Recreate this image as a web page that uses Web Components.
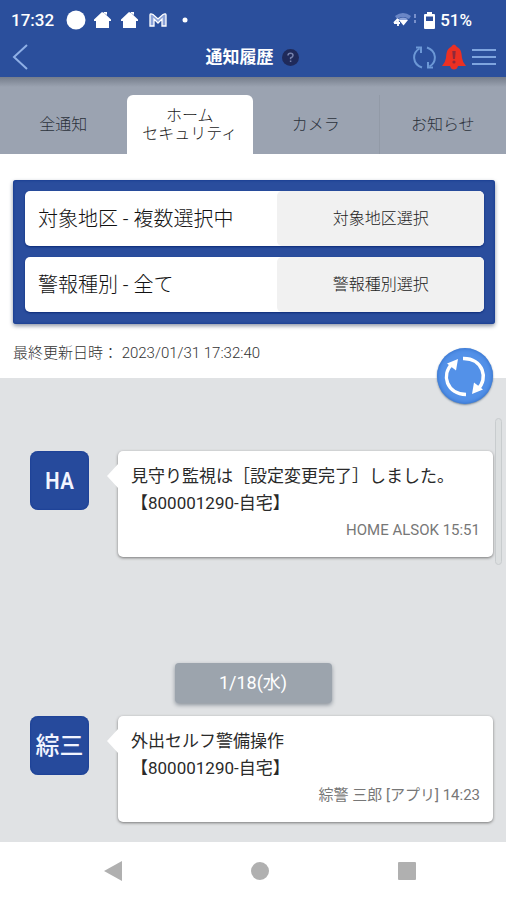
<!DOCTYPE html>
<html lang="ja">
<head>
<meta charset="utf-8">
<meta name="viewport" content="width=device-width, initial-scale=1">
<title>通知履歴</title>
<style>
  html, body { margin: 0; background: #fff; }
  body { font-family: Roboto, "Noto Sans CJK JP", sans-serif; color: #3a3a3a; }
</style>
</head>
<body>
<notice-app></notice-app>
<script>
const RESET = `*{box-sizing:border-box}button{font:inherit;color:inherit;border:0;margin:0;padding:0;background:none;cursor:pointer}svg{display:block}`;

function define(name, css, html) {
  const template = document.createElement('template');
  template.innerHTML = `<style>${RESET}${css}</style>${html}`;
  customElements.define(name, class extends HTMLElement {
    constructor() {
      super();
      this.attachShadow({ mode: 'open' }).append(template.content.cloneNode(true));
    }
  });
}

define('status-bar', `
  :host{display:flex;align-items:center;justify-content:space-between;height:40px;padding:0 34px 0 11px;color:#fff;font-size:17px;font-weight:500}
  div{display:flex;align-items:center}
  .left svg{margin-left:12px}
  .left .dot{margin-left:0}
  .right svg{margin-right:5px}
`, `
  <div class="left"><span>17:32</span>
    <svg width="116" height="20" viewBox="0 0 116 20" fill="#fff">
      <circle cx="10" cy="10" r="9.5"/>
      <path d="M37 2L45 9.5V11H43V18H30V11H28V9.5L36 2L38 3V2H41V5Z"/>
      <path d="M64 2L72 9.5V11H70V18H57V11H55V9.5L63 2L65 3V2H68V5Z"/>
      <path d="M84 16V5Q84 3 87 4.5L92 9L97 4.5Q100 3 100 5V16H96V9L92 13L88 9V16Z" fill="#8ca3d8" stroke="#fff" stroke-width="1.3"/>
    </svg>
    <svg class="dot" width="6" height="6" viewBox="0 0 6 6" fill="#fff"><circle cx="3" cy="3" r="2.5"/></svg>
  </div>
  <div class="right">
    <svg width="26" height="18" viewBox="0 0 26 18">
      <path d="M2 5Q10 -1 18 5L16 8Q10 4 4 8Z" fill="#6a86c6"/><path d="M5 8Q10 5 15 8L13 10H7Z" fill="#8ea4d8"/>
      <path d="M6 9H15L10.5 14.5Z" fill="#fff"/><path d="M5 8V15M1 12H7M1 12L5 8" stroke="#fff" stroke-width="1.8" fill="none"/>
      <path d="M22 3v4M22 9v3" stroke="#7890cb" stroke-width="2"/>
    </svg>
    <svg width="11" height="17" viewBox="0 0 11 17"><path d="M3 0H8V2H10Q11 2 11 3V16Q11 17 10 17H1Q0 17 0 16V3Q0 2 1 2H3Z" fill="#fff"/><path d="M2 4.5H9V9H2Z" fill="#2c4e9b"/></svg>
    <span>51%</span>
  </div>
`);

define('title-bar', `
  :host{display:grid;grid-template-columns:1fr auto 1fr;align-items:center;height:37px;padding:0 10px 3px 12px;color:#fff}
  h1{margin:0;font-size:17px;line-height:24px;font-weight:700}
  .mid,.right{display:flex;align-items:center}
  .mid{gap:8px;padding-right:4px}
  .right{justify-content:flex-end;gap:6px}
  .back{justify-self:start}
`, `
  <button class="back" aria-label="戻る"><svg width="16" height="26" viewBox="0 0 16 26" fill="none" stroke="#8fb0e6" stroke-width="2"><path d="M15 1L2 13L15 25"/></svg></button>
  <div class="mid"><h1>通知履歴</h1>
    <button aria-label="ヘルプ"><svg width="17" height="17" viewBox="0 0 17 17"><circle cx="8.5" cy="8.5" r="8.5" fill="#1f2a5a"/><path d="M6 6.5Q6 4.3 8.5 4.3T11 6.5Q11 7.8 8.6 9V10.2M8.6 11.5V13" fill="none" stroke="#7682ad" stroke-width="1.5"/></svg></button></div>
  <div class="right">
    <button aria-label="更新"><svg width="23" height="25" viewBox="0 0 23 25" fill="none" stroke="#6c98d6" stroke-width="2"><path d="M9 22.5C-1 19 -1 8 6.5 3.5M14 2.5C24 6 24 17 16.5 21.5"/><path d="M3 2.5H8V8M20 22.5H15V17"/></svg></button>
    <button aria-label="警報"><svg width="24" height="26" viewBox="0 0 24 26"><path d="M9 3Q12 -2 15 3C19 5 19.5 8 20 14Q20.5 18 24 22H16Q15 25.5 12 25.5T8 22H0Q3.5 18 4 14C4.5 8 5 5 9 3Z" fill="#eb3023"/><path d="M10.3 7H13.7L13 15H11Z" fill="#8f2939"/><circle cx="12" cy="18" r="1.6" fill="#8f2939"/></svg></button>
    <button aria-label="メニュー"><svg width="24" height="18" viewBox="0 0 24 18" stroke="#7fa5df" stroke-width="2"><path d="M0 2H24M0 9H24M0 16H24"/></svg></button>
  </div>
`);

define('tab-item', `
  :host{display:flex}
  button{flex:1;font-size:16px;line-height:18px;font-weight:300;color:#2c323c;border-right:1px solid #929aa7}
  :host([selected]) button{background:#fff;border:0;border-radius:6px 6px 0 0;color:#222}
  :host([plain]) button{border:0}
`, `<button role="tab"><slot></slot></button>`);

define('tab-strip', `
  :host{display:grid;grid-template-columns:repeat(4,1fr);height:77px;padding-top:18px;background:linear-gradient(#757d8b,#9ba3b1 10px)}
`, `
  <tab-item plain>全通知</tab-item>
  <tab-item selected>ホーム<br>セキュリティ</tab-item>
  <tab-item>カメラ</tab-item>
  <tab-item plain>お知らせ</tab-item>
`);

define('filter-row', `
  :host{display:grid;grid-template-columns:11fr 9fr;height:55px;background:#fff;border-radius:5px;overflow:hidden;box-shadow:0 1px 2px #0b2a78}
  .v{align-self:center;padding-left:13px;font-size:20px;line-height:28px;font-weight:300;color:#111;white-space:nowrap}
  button{padding-bottom:3px;background:#f1f1f1;border-radius:5px;font-size:16px;font-weight:300;color:#222}
`, `<span class="v"><slot></slot></span><button><slot name="action"></slot></button>`);

define('filter-panel', `
  :host{display:grid;gap:11px;margin:26px 11px 0 13px;padding:11px 11px 12px 12px;background:#2a4d9d;border-radius:3px;box-shadow:inset 0 0 3px #0d348c,0 2px 4px #8c95a5}
`, `
  <filter-row>対象地区 - 複数選択中<span slot="action">対象地区選択</span></filter-row>
  <filter-row>警報種別 - 全て<span slot="action">警報種別選択</span></filter-row>
`);

define('update-line', `
  :host{display:block;position:relative;height:54px;padding:18px 13px 0;font-size:15px;line-height:22px;font-weight:300;color:#333}
  button{position:absolute;right:13px;bottom:-26px;z-index:1;border-radius:50%;background:#5391e8;box-shadow:inset 0 0 4px #2b68c4,0 1px 2px #789}
`, `
  <span>最終更新日時： 2023/01/31 17:32:40</span>
  <button aria-label="再読み込み"><svg width="56" height="56" viewBox="0 0 56 56" fill="none" stroke="#fff" stroke-width="3.5"><path d="M29 46.5C10 46 3.5 27 15.5 15.5M26 10.5C46 10 52 31 40.5 41.5"/><path d="M10 15.5L21 11L19 22.5ZM46 41.5L35 46L37 34.5Z" fill="#fff" stroke="none"/></svg></button>
`);

define('notice-item', `
  :host{display:grid;grid-template-columns:59px 1fr;gap:29px;align-items:start;margin:0 13px 0 30px}
  .avatar{display:grid;place-items:center;height:59px;border-radius:8px;background:#264a9c;box-shadow:inset 0 0 2px #0c338d;color:#f2f5ff;font-size:24px;font-weight:500;line-height:30px}
  :host([latin]) .avatar{font-family:"Roboto Condensed","Liberation Sans Narrow",Roboto,sans-serif}
  .bubble{position:relative;padding:12px 13px 13px;background:#fff;border-radius:5px;box-shadow:0 1px 3px #777;font-size:17px;line-height:27px;color:#2a2a2a}
  .tail{position:absolute;left:-12px;top:12px}
  .meta{font-size:15px;color:#777;text-align:right}
`, `
  <div class="avatar"><slot name="avatar"></slot></div>
  <div class="bubble">
    <svg class="tail" width="13" height="26" viewBox="0 0 13 26"><path d="M13 0L1 13L13 26Z" fill="#fff"/></svg>
    <div><slot></slot></div>
    <div class="meta"><slot name="meta"></slot></div>
  </div>
`);

define('date-chip', `
  :host{display:block;width:157px;margin:106px auto 13px;background:#9ca4ad;border-radius:4px;box-shadow:0 2px 4px #8b929b;color:#fff;font-size:18px;line-height:40px;text-align:center}
`, `<slot></slot>`);

define('notice-list', `
  :host{display:block;position:relative;flex:1;padding:73px 0 20px;background:#e0e2e4}
  .bar{position:absolute;right:4px;top:40px;width:7px;height:147px;border:1px solid #c8ccce;border-radius:4px;background:#dcdfe0}
`, `
  <notice-item latin><span slot="avatar">HA</span>見守り監視は［設定変更完了］しました。<br>【800001290-自宅】<span slot="meta">HOME ALSOK 15:51</span></notice-item>
  <date-chip>1/18(水)</date-chip>
  <notice-item><span slot="avatar">綜三</span>外出セルフ警備操作<br>【800001290-自宅】<span slot="meta">綜警 三郎 [アプリ] 14:23</span></notice-item>
  <div class="bar"></div>
`);

define('system-nav', `
  :host{display:grid;grid-template-columns:repeat(3,1fr);height:58px;padding:0 26px 0 40px;background:#fff}
  button{display:grid;place-items:center}
`, `
  <button aria-label="戻る"><svg width="18" height="20" viewBox="0 0 18 20" fill="#b0b0b0"><path d="M18 0V20L0 10Z"/></svg></button>
  <button aria-label="ホーム"><svg width="18" height="18" viewBox="0 0 18 18" fill="#b0b0b0"><circle cx="9" cy="9" r="9"/></svg></button>
  <button aria-label="履歴"><svg width="18" height="18" viewBox="0 0 18 18" fill="#b0b0b0"><rect width="18" height="18" rx="1"/></svg></button>
`);

define('notice-app', `
  :host{display:flex;flex-direction:column;min-height:100vh}
  header{background:#2b4f9c}
`, `
  <header><status-bar></status-bar><title-bar></title-bar></header>
  <tab-strip role="tablist"></tab-strip>
  <filter-panel></filter-panel>
  <update-line></update-line>
  <notice-list></notice-list>
  <system-nav></system-nav>
`);
</script>
</body>
</html>
